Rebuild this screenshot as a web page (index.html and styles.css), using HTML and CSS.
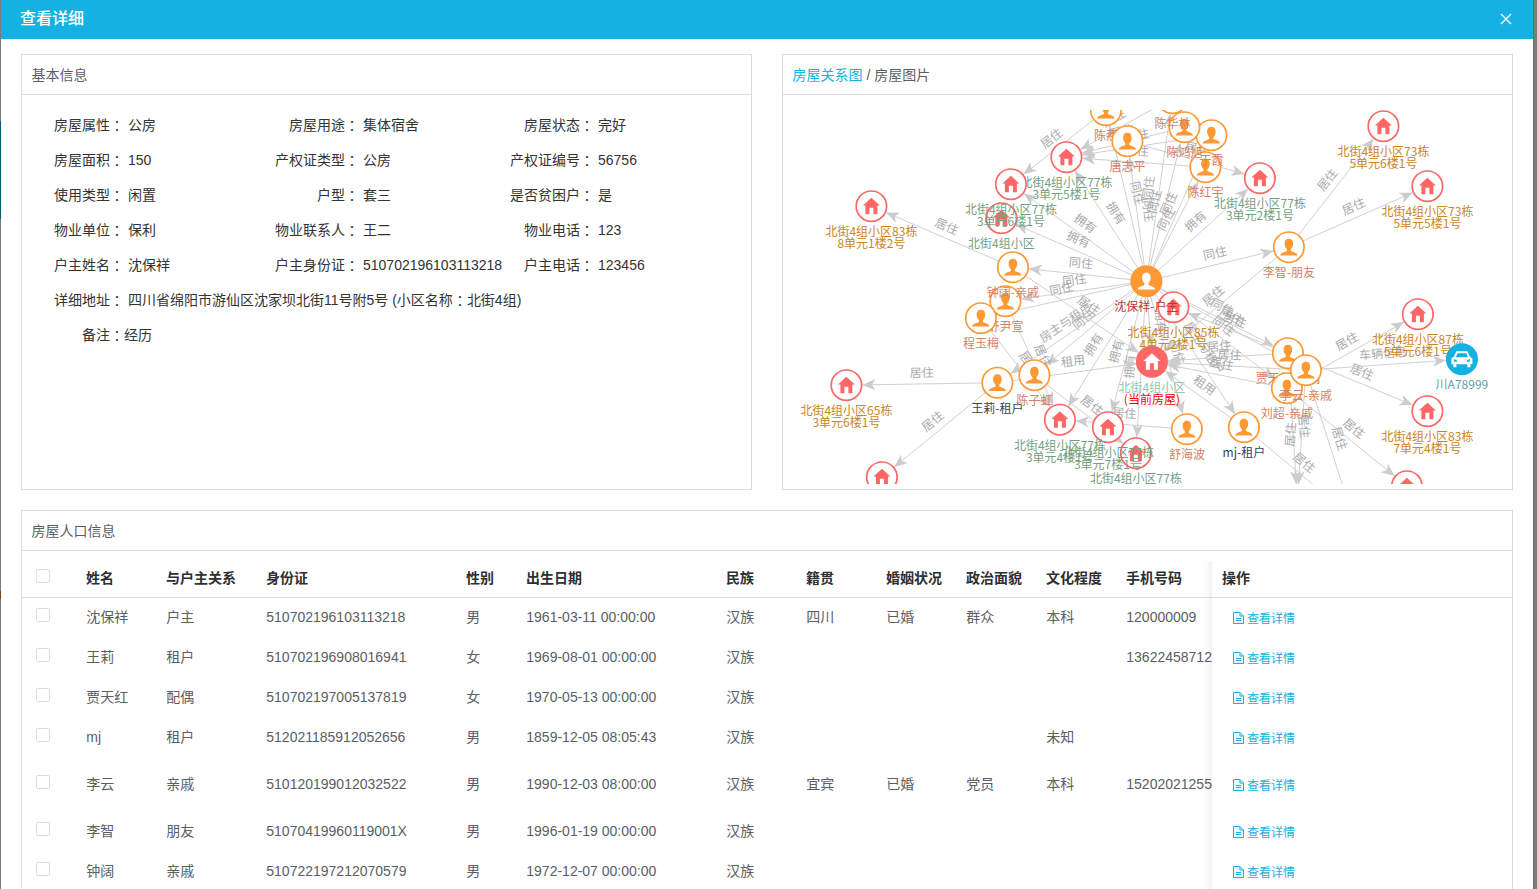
FILE: index.html
```html
<!DOCTYPE html>
<html lang="zh-CN">
<head>
<meta charset="utf-8">
<title>查看详细</title>
<link rel="stylesheet" href="styles.css">
</head>
<body>
<div class="dialog">
  <header class="dialog-head">
    <h1>查看详细</h1>
    <svg class="close" viewBox="0 0 12 12"><path d="M1 1 11 11M11 1 1 11"/></svg>
  </header>
  <main class="dialog-body">
    <div class="top-row">
      <section class="panel info-panel">
        <h2 class="panel-head">基本信息</h2>
        <div class="info">
          <div class="pair"><span>房屋属性<i lang="zh-TW">：</i></span><b>公房</b></div><div class="pair"><span>房屋用途<i lang="zh-TW">：</i></span><b>集体宿舍</b></div><div class="pair"><span>房屋状态<i lang="zh-TW">：</i></span><b>完好</b></div>
          <div class="pair"><span>房屋面积<i lang="zh-TW">：</i></span><b>150</b></div><div class="pair"><span>产权证类型<i lang="zh-TW">：</i></span><b>公房</b></div><div class="pair"><span>产权证编号<i lang="zh-TW">：</i></span><b>56756</b></div>
          <div class="pair"><span>使用类型<i lang="zh-TW">：</i></span><b>闲置</b></div><div class="pair"><span>户型<i lang="zh-TW">：</i></span><b>套三</b></div><div class="pair"><span>是否贫困户<i lang="zh-TW">：</i></span><b>是</b></div>
          <div class="pair"><span>物业单位<i lang="zh-TW">：</i></span><b>保利</b></div><div class="pair"><span>物业联系人<i lang="zh-TW">：</i></span><b>王二</b></div><div class="pair"><span>物业电话<i lang="zh-TW">：</i></span><b>123</b></div>
          <div class="pair"><span>户主姓名<i lang="zh-TW">：</i></span><b>沈保祥</b></div><div class="pair"><span>户主身份证<i lang="zh-TW">：</i></span><b>510702196103113218</b></div><div class="pair"><span>户主电话<i lang="zh-TW">：</i></span><b>123456</b></div>
          <div class="pair wide"><span>详细地址<i lang="zh-TW">：</i></span><b>四川省绵阳市游仙区沈家坝北街11号附5号 (小区名称<i lang="zh-TW">：</i>北街4组)</b></div>
          <div class="pair wide tight"><span>备注<i lang="zh-TW">：</i></span><b>经历</b></div>
        </div>
      </section>
      <section class="panel graph-panel">
        <h2 class="panel-head"><a>房屋关系图</a> / 房屋图片</h2>
        <svg class="graph" id="graph" viewBox="782.6 109.8 729 374">
          <defs>
            <marker id="arrow" viewBox="0 0 13 11" markerWidth="13" markerHeight="11" refX="29" refY="5.5" orient="auto" markerUnits="userSpaceOnUse"><path d="M13 5.5 0 0 3.500 5.500 0 11z" fill="#ccc"/></marker>
            <g id="house"><path d="M0-8.5 8.5-.7H6V8H2V1.5H-2V8H-6V-.7H-8.5z"/></g>
            <g id="person"><path d="M0-8.5C3.2-8.5 4.3-6.300 4.300-3.500 4.300-1 3.200.8 2 2V3.800C3.500 4.800 8.200 5 8.800 8.300H-8.800C-8.200 5-3.500 4.800-2 3.800V2C-3.200.8-4.300-1-4.300-3.500-4.300-6.300-3.200-8.500 0-8.500z"/></g>
            <g id="car"><path fill-rule="evenodd" d="M-5.500-8H5.500L8-2.500 10.500-1V5H8.500V8H5.500V5H-5.500V8H-8.500V5H-10.500V-1L-8-2.500zM-4.500-6-6-2H6L4.500-6zM-8 0V2.500H-4.500C-5 .8-6 0-8 0zM8 0C6 0 5 .8 4.500 2.500H8z"/></g>
          </defs>
        </svg>
      </section>
    </div>
    <section class="panel people-panel">
      <h2 class="panel-head">房屋人口信息</h2>
      <div class="table-wrap">
        <table class="people">
          <colgroup><col class="w54"><col class="w80"><col class="w100"><col class="w200"><col class="w60"><col class="w200"><col class="w80"><col class="w80"><col class="w80"><col class="w80"><col class="w80"><col class="w96"><col class="w300"></colgroup>
          <thead><tr><th><i class="box"></i></th><th>姓名</th><th>与户主关系</th><th>身份证</th><th>性别</th><th>出生日期</th><th>民族</th><th>籍贯</th><th>婚姻状况</th><th>政治面貌</th><th>文化程度</th><th>手机号码</th><th>操作</th></tr></thead>
          <tbody id="rows"></tbody>
        </table>
        <div class="fixed-shade"></div>
      </div>
    </section>
  </main>
</div>
<script src="app.js"></script>
</body>
</html>
```
FILE: styles.css
```css
* { box-sizing: border-box; }
body {
  margin: 0;
  height: 889px;
  overflow: hidden;
  padding: 0 4px 0 1px;
  font: 14px "Liberation Sans", "Noto Sans CJK SC", sans-serif;
  color: #5a5e66;
  background:
    linear-gradient(#045a72, #045a72) 0 121px / 1px 98px no-repeat,
    linear-gradient(#7a4a1c, #7a4a1c) 0 591px / 1px 8px no-repeat,
    linear-gradient(#6b6b6b, #6b6b6b) 1533px 0 / 1px 889px no-repeat,
    #7b7b7b;
}
h1, h2 { margin: 0; font-weight: 400; }
i, b { font-style: normal; font-weight: 400; }
.dialog { height: 889px; background: #fff; overflow: hidden; }
.dialog-head {
  height: 39px;
  padding: 0 21px 2px 19px;
  display: flex;
  align-items: center;
  justify-content: space-between;
  background: #14b1e2;
  color: #fff;
}
.dialog-head h1 { font-size: 16px; line-height: 20px; font-weight: 500; }
.close { width: 12px; height: 12px; margin-top: 1px; fill: none; stroke: #fff; stroke-width: 1.3; }
.dialog-body { padding: 15px 20px 0; }
.top-row { display: grid; grid-template-columns: 731px 731px; gap: 30px; margin-bottom: 20px; }
.panel { border: 1px solid #d8dce5; }
.info-panel, .graph-panel { height: 436px; }
.panel-head { height: 40px; padding: 1px 0 0 9.5px; font-size: 14px; line-height: 39px; border-bottom: 1px solid #d8dce5; }
.panel-head a { color: #14b1e2; }
.info { display: grid; grid-template-columns: 235px 235px 235px; grid-auto-rows: 35px; padding: 13px 0 0; color: #333; line-height: 35px; }
.pair { display: flex; white-space: nowrap; height: 35px; }
.pair span { width: 102px; text-align: right; flex: none; }
.pair b { padding-left: 4px; }
.pair i { font-family: "Noto Sans CJK TC", sans-serif; line-height: 1; position: relative; top: 1px; }
.wide { grid-column: 1 / -1; }
.tight b { padding-left: 0; }
.graph { display: block; width: 729px; height: 374px; margin-top: 15px; overflow: hidden; font: 12px "Noto Sans CJK SC", sans-serif; }
.graph text { text-anchor: middle; }
.edge { stroke: #d0d0d0; stroke-width: 1; }
.edge-label { fill: #aaa; }
.ring { fill: #fff; stroke-width: 1.7; }
.people-panel { height: 400px; }
.table-wrap { position: relative; padding-top: 10px; }
.people { width: 1490px; table-layout: fixed; border-collapse: separate; border-spacing: 0; }
.people th { height: 37px; padding: 0 0 2px 10px; text-align: left; color: #2d2f33; font-weight: 700; line-height: 20px; border-bottom: 1px solid #d8dce5; white-space: nowrap; }
.people td { height: 40px; padding: 0 0 2px 10.3px; line-height: 20px; white-space: nowrap; }
.people tr.tall td { height: 54px; }
.people th:first-child, .people td:first-child { padding: 0 0 7px 14px; }
.box { display: block; width: 14px; height: 14px; border: 1px solid #d8dce5; border-radius: 2px; background: #fff; }
.w54 { width: 54px; } .w60 { width: 60px; } .w80 { width: 80px; } .w96 { width: 96px; } .w100 { width: 100px; } .w200 { width: 200px; } .w300 { width: 300px; }
.detail { display: flex; align-items: center; gap: 3px; padding: 3px 0 0 10.6px; font-size: 12px; line-height: 16px; color: #14b1e2; }
.detail svg { width: 11px; height: 12px; margin-top: -1px; fill: #e8f8fd; stroke: #14b1e2; }
.fixed-shade { position: absolute; left: 1180px; top: 10px; width: 10px; height: 340px; background: linear-gradient(to right, rgba(0,0,0,0), rgba(0,0,0,.015) 50%, rgba(0,0,0,.06)); }
```
FILE: app.js
```js
const NS = 'http://www.w3.org/2000/svg';
const graph = document.getElementById('graph');

function add(tag, attrs, text, parent = graph) {
  const el = document.createElementNS(NS, tag);
  for (const key in attrs) el.setAttribute(key, attrs[key]);
  if (text) el.textContent = text;
  parent.appendChild(el);
  return el;
}

const BROWN = '#ca8622', GREEN = '#749f83', KIN = '#d48265', TENANT = '#2f4554';

// id: [x, y, icon, label lines, label colour, filled], in drawing order
const nodes = {
  a83: [871, 206, 'house', ['北街4组小区83栋', '8单元1楼2号'], BROWN],
  a65: [846, 385, 'house', ['北街4组小区65栋', '3单元6楼1号'], BROWN],
  low: [881.5, 477, 'house', [], BROWN],
  b73: [1383, 126, 'house', ['北街4组小区73栋', '5单元6楼1号'], BROWN],
  c73: [1427, 186, 'house', ['北街4组小区73栋', '5单元5楼1号'], BROWN],
  b87: [1417.5, 314, 'house', ['北街4组小区87栋', '5单元6楼1号'], BROWN],
  b83: [1427, 411, 'house', ['北街4组小区83栋', '7单元4楼1号'], BROWN],
  far: [1406.5, 486, 'house', [], BROWN],
  car: [1461.5, 359, 'car', ['川A78999'], '#61a0a8', true],
  h5: [1066, 157, 'house', ['北街4组小区77栋', '3单元5楼1号'], GREEN],
  hx: [1001, 218, 'house', ['北街4组小区'], GREEN],
  h6: [1010.5, 184, 'house', ['北街4组小区77栋', '3单元6楼1号'], GREEN],
  h2: [1259.5, 178, 'house', ['北街4组小区77栋', '3单元2楼1号'], GREEN],
  h0: [1135.5, 453, 'house', ['北街4组小区77栋'], GREEN],
  h7: [1107.5, 427, 'house', ['北街4组小区77栋', '3单元7楼1号'], GREEN],
  h4: [1059.5, 419.5, 'house', ['北街4组小区77栋', '3单元4楼1号'], GREEN],
  now: [1151.5, 361.5, 'house', ['北街4组小区', '(当前房屋)'], '#91c7ae', true],
  h85: [1173, 307, 'house', ['北街4组小区85栋', '4单元2楼1号'], BROWN],
  chy: [1205, 167, 'person', ['陈红宇'], KIN],
  yx: [1211, 135, 'person', ['于霞'], KIN],
  chx: [1184, 127, 'person', ['陈鸿旭'], KIN],
  chl: [1172, 98, 'person', ['陈华林'], KIN],
  cy: [1105.5, 110, 'person', ['陈燕'], KIN],
  tzp: [1127, 141, 'person', ['唐志平'], KIN],
  lz: [1288.5, 247, 'person', ['李智-朋友'], KIN],
  syx: [1005, 301, 'person', ['舒尹宣'], KIN],
  cym: [980.5, 318, 'person', ['程玉梅'], KIN],
  zk: [1012.5, 267, 'person', ['钟阔-亲戚'], KIN],
  wl: [997, 382.5, 'person', ['王莉-租户'], TENANT],
  czh: [1034, 375, 'person', ['陈子虹'], KIN],
  shb: [1186.5, 429, 'person', ['舒海波'], KIN],
  mj: [1243.5, 427, 'person', ['mj-租户'], TENANT],
  jth: [1287.5, 353, 'person', ['贾天红-配偶'], KIN],
  lc: [1286.5, 388, 'person', ['刘超-亲戚'], KIN],
  ly: [1305.5, 370, 'person', ['李云-亲戚'], KIN],
  sbx: [1146, 281, 'person', ['沈保祥-户主'], '#c23531', true],
  off1: [1297, 500, 'house', [], BROWN],
  off2: [1351, 513, 'house', [], BROWN],
  off3: [1350, 515, 'house', [], BROWN]
};

const edges = [
  ['sbx', '拥有', 'h5 h6 hx h2 h4 h7 h0 now'],
  ['sbx', '同住', 'cy tzp chl chx yx chy zk syx cym czh lz shb jth ly lc'],
  ['sbx', '房主与租户', 'wl mj'],
  ['lz', '居住', 'b73 c73 now'],
  ['wl', '居住', 'a65 low'], ['wl', '租用', 'now'], ['mj', '租用', 'now'],
  ['mj', '居住', 'off3'],
  ['zk', '居住', 'a83 now'], ['cy', '居住', 'h6'], ['tzp', '居住', 'h2'],
  ['chl', '居住', 'h5'], ['chx', '居住', 'h5'], ['yx', '居住', 'h5'], ['chy', '居住', 'h5'],
  ['syx', '居住', 'h4'], ['cym', '居住', 'h4'], ['czh', '居住', 'h0'], ['shb', '居住', 'h4'],
  ['jth', '居住', 'h85 now b83 off1'], ['ly', '居住', 'now off1 off2'], ['ly', '车辆信息', 'car'],
  ['lc', '居住', 'now b87 far']
];

for (const [from, label, targets] of edges) {
  for (const to of targets.split(' ')) {
    const [x1, y1] = nodes[from], [x2, y2] = nodes[to];
    add('line', { x1, y1, x2, y2, class: 'edge', 'marker-end': 'url(#arrow)' });
    let angle = Math.atan2(y2 - y1, x2 - x1) * 180 / Math.PI;
    if (angle > 90) angle -= 180;
    if (angle < -90) angle += 180;
    add('text', { class: 'edge-label', y: -7, transform: `translate(${(x1 + x2) / 2} ${(y1 + y2) / 2}) rotate(${angle})` }, label);
  }
}

for (const id in nodes) {
  const [x, y, icon, lines, color, filled] = nodes[id];
  const tone = { house: '#ff6666', person: '#ff9933', car: '#14b1e2' }[icon];
  const g = add('g', { transform: `translate(${x} ${y})` });
  add('circle', { r: 15.2, class: 'ring', style: `stroke:${tone};fill:${filled ? tone : '#fff'}` }, '', g);
  add('use', { href: '#' + icon, fill: filled ? '#fff' : tone }, '', g);
  lines.forEach((line, i) => {
    add('text', { y: 30 + i * 12, fill: line === '(当前房屋)' ? '#f00' : color }, line, g);
  });
}

const people = [
  ['沈保祥', '户主', '510702196103113218', '男', '1961-03-11 00:00:00', '汉族', '四川', '已婚', '群众', '本科', '120000009'],
  ['王莉', '租户', '510702196908016941', '女', '1969-08-01 00:00:00', '汉族', '', '', '', '', '13622458712'],
  ['贾天红', '配偶', '510702197005137819', '女', '1970-05-13 00:00:00', '汉族', '', '', '', '', ''],
  ['mj', '租户', '512021185912052656', '男', '1859-12-05 08:05:43', '汉族', '', '', '', '未知', ''],
  ['李云', '亲戚', '510120199012032522', '男', '1990-12-03 08:00:00', '汉族', '宜宾', '已婚', '党员', '本科', '15202021255'],
  ['李智', '朋友', '51070419960119001X', '男', '1996-01-19 00:00:00', '汉族', '', '', '', '', ''],
  ['钟阔', '亲戚', '510722197212070579', '男', '1972-12-07 00:00:00', '汉族', '', '', '', '', '']
];
const detail = '<span class="detail"><svg viewBox="0 0 11 12"><path d="M.5.5H7L10.500 4V11.500H.5zM7 .5V4H10.500M3 6.500H8M3 8.500H8"/></svg>查看详情</span>';
document.getElementById('rows').innerHTML = people.map((row, i) =>
  `<tr${i === 4 ? ' class="tall"' : ''}><td><i class="box"></i></td>${row.map(c => `<td>${c}</td>`).join('')}<td>${detail}</td></tr>`
).join('');
```
